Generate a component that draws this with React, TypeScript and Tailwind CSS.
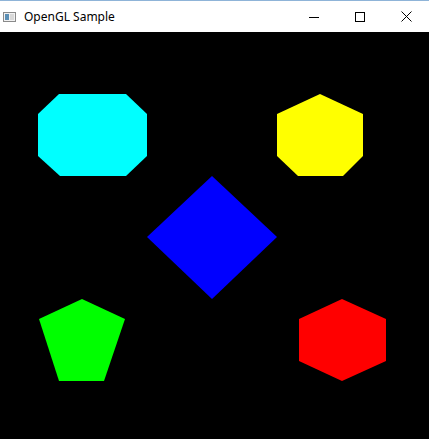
import React from "react";

const Y = 32;
const pts = (arr: number[][]) => arr.map(([x, y]) => `${x},${y - Y}`).join(" ");

export default function App() {
  return (
    <div className="w-[429px] h-[439px] flex flex-col bg-white overflow-hidden">
      <div className="h-[32px] flex items-center border-t border-[#8fb4d8] bg-white relative">
        <svg width="14" height="11" viewBox="0 0 14 11" className="ml-[3px] mt-[2px]">
          <rect x="0.5" y="0.5" width="12" height="9" fill="#f2f2f2" stroke="#8a8a8a" />
          <rect x="2" y="2" width="4" height="6" fill="#5b8fb5" />
          <rect x="7" y="2" width="4" height="6" fill="#d8d8d8" />
        </svg>
        <span
          className="ml-[7px] text-[12px] text-black leading-none mt-[1px]"
          style={{ fontFamily: '"Noto Sans", "Open Sans", sans-serif' }}
        >
          OpenGL Sample
        </span>
        <div className="ml-auto flex items-center h-full">
          <div className="w-[46px] h-full flex items-center justify-center">
            <svg width="10" height="10" viewBox="0 0 10 10">
              <line x1="0" y1="5.5" x2="10" y2="5.5" stroke="#000" strokeWidth="1" />
            </svg>
          </div>
          <div className="w-[46px] h-full flex items-center justify-center">
            <svg width="10" height="10" viewBox="0 0 10 10">
              <rect x="0.5" y="0.5" width="9" height="9" fill="none" stroke="#000" strokeWidth="1" />
            </svg>
          </div>
          <div className="w-[46px] h-full flex items-center justify-center">
            <svg width="11" height="11" viewBox="0 0 11 11">
              <line x1="0.5" y1="0.5" x2="10.5" y2="10.5" stroke="#000" strokeWidth="1" />
              <line x1="10.5" y1="0.5" x2="0.5" y2="10.5" stroke="#000" strokeWidth="1" />
            </svg>
          </div>
        </div>
      </div>
      <div className="flex-1 bg-black">
        <svg width="429" height="407" viewBox="0 0 429 407">
          <polygon
            fill="#00ffff"
            points={pts([[59, 94], [126, 94], [147, 114], [147, 156], [126, 176], [60, 176], [38, 156], [38, 114]])}
          />
          <polygon
            fill="#ffff00"
            points={pts([[320, 94], [363, 114], [363, 156], [343, 176], [298, 176], [277, 156], [277, 114]])}
          />
          <polygon
            fill="#0000ff"
            points={pts([[212, 176], [277, 237], [212, 299], [147, 237]])}
          />
          <polygon
            fill="#00ff00"
            points={pts([[82, 299], [125, 319], [104, 381], [59, 381], [39, 319]])}
          />
          <polygon
            fill="#ff0000"
            points={pts([[342, 299], [386, 319], [386, 361], [342, 381], [299, 361], [299, 319]])}
          />
        </svg>
      </div>
    </div>
  );
}
